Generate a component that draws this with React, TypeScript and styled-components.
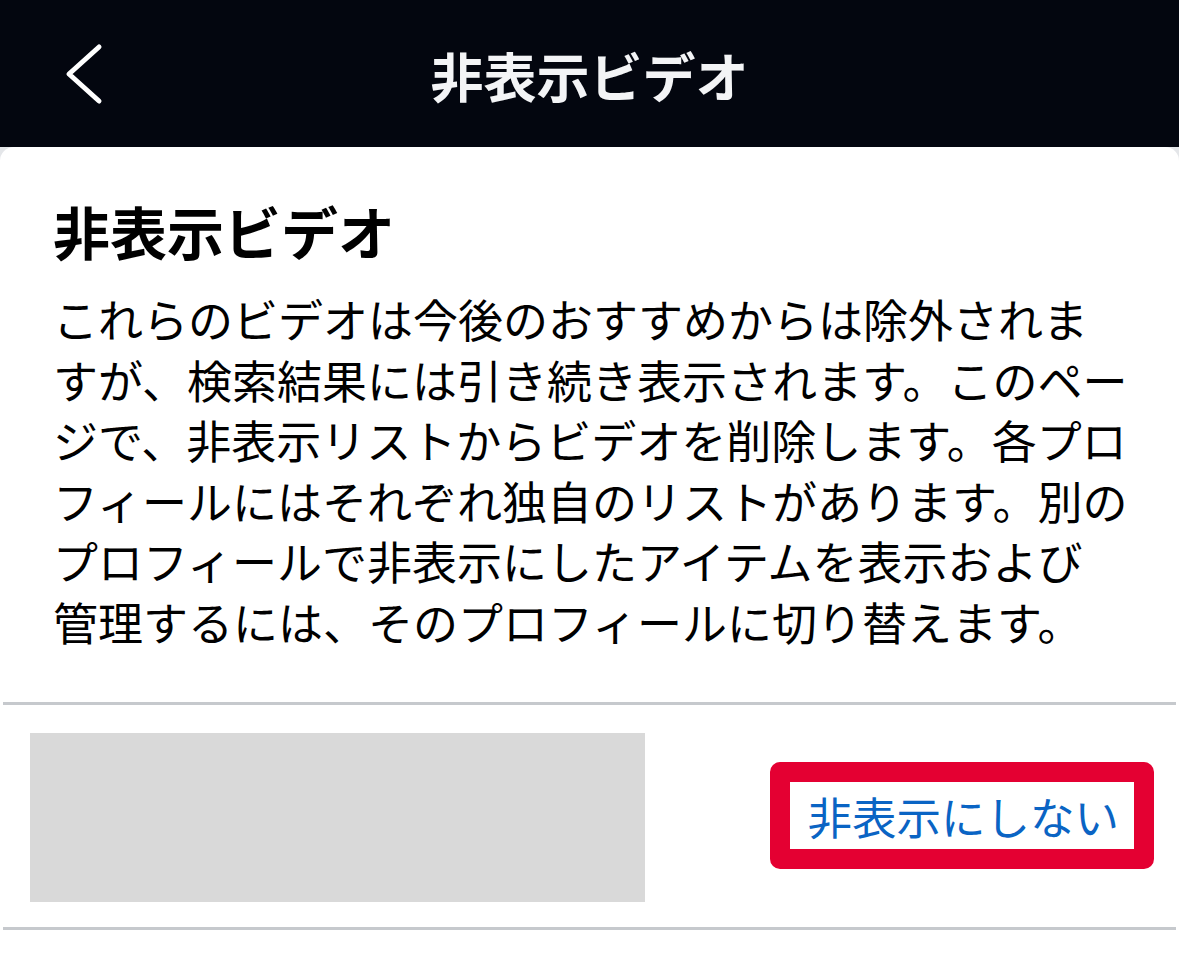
import React from "react";
import styled, { createGlobalStyle } from "styled-components";

const GlobalStyle = createGlobalStyle`
  html, body {
    margin: 0;
    padding: 0;
    background: #e4e6e9;
  }
  body {
    font-family: "Noto Sans CJK JP", "Noto Sans", sans-serif;
    -webkit-font-smoothing: antialiased;
  }
`;

const Screen = styled.div`
  width: 1179px;
  height: 962px;
  display: flex;
  flex-direction: column;
  background: #e4e6e9;
  overflow: hidden;
`;

const NavBar = styled.header`
  height: 147px;
  flex: none;
  background: #03060f;
  display: grid;
  grid-template-columns: 1fr auto 1fr;
  align-items: center;
`;

const BackButton = styled.button`
  justify-self: start;
  margin-left: 64px;
  padding: 0;
  border: none;
  background: none;
  display: flex;
  align-items: center;
  cursor: pointer;
`;

const NavTitle = styled.h1`
  margin: 0 0 0 0;
  padding-top: 4px;
  font-size: 53px;
  font-weight: 600;
  line-height: 1;
  color: #f3f4f6;
`;

const Card = styled.main`
  flex: 1;
  background: #ffffff;
  border-radius: 14px 14px 0 0;
  display: flex;
  flex-direction: column;
`;

const Intro = styled.section`
  padding: 48px 30px 49px 53px;
`;

const Heading = styled.h2`
  margin: 0 0 24px;
  font-size: 57px;
  font-weight: 700;
  line-height: 70px;
  color: #000000;
`;

const Description = styled.p`
  margin: 0;
  font-size: 45px;
  font-weight: 400;
  line-height: 60.6px;
  color: #000000;
  white-space: nowrap;
`;

const Divider = styled.hr`
  margin: 0 3px;
  height: 3px;
  border: none;
  background: #c6c9cd;
`;

const VideoRow = styled.div`
  display: flex;
  align-items: center;
  justify-content: space-between;
  padding: 28px 25px 25px 30px;
`;

const Thumbnail = styled.div`
  width: 615px;
  height: 169px;
  background: #d9d9d9;
`;

const Highlight = styled.div`
  border: 20px solid #e40032;
  border-radius: 10px;
  margin-top: -4px;
`;

const UnhideButton = styled.button`
  display: block;
  height: 67px;
  padding: 0 15px 0 17px;
  border: none;
  background: #ffffff;
  font-family: inherit;
  font-size: 44.5px;
  line-height: 67px;
  color: #0a64c4;
  cursor: pointer;
`;

const lines = [
  "これらのビデオは今後のおすすめからは除外されま",
  "すが、検索結果には引き続き表示されます。このペー",
  "ジで、非表示リストからビデオを削除します。各プロ",
  "フィールにはそれぞれ独自のリストがあります。別の",
  "プロフィールで非表示にしたアイテムを表示および",
  "管理するには、そのプロフィールに切り替えます。",
];

function Chevron() {
  return (
    <svg width="40" height="64" viewBox="0 0 40 64" fill="none">
      <polyline
        points="35,5 5,32 35,59"
        stroke="#ffffff"
        strokeWidth="5"
        strokeLinecap="round"
        strokeLinejoin="round"
      />
    </svg>
  );
}

export default function App() {
  return (
    <Screen>
      <GlobalStyle />
      <NavBar>
        <BackButton aria-label="戻る">
          <Chevron />
        </BackButton>
        <NavTitle>非表示ビデオ</NavTitle>
        <div />
      </NavBar>
      <Card>
        <Intro>
          <Heading>非表示ビデオ</Heading>
          <Description>
            {lines.map((line, i) => (
              <React.Fragment key={i}>
                {line}
                {i < lines.length - 1 && <br />}
              </React.Fragment>
            ))}
          </Description>
        </Intro>
        <Divider />
        <VideoRow>
          <Thumbnail />
          <Highlight>
            <UnhideButton>非表示にしない</UnhideButton>
          </Highlight>
        </VideoRow>
        <Divider />
      </Card>
    </Screen>
  );
}
